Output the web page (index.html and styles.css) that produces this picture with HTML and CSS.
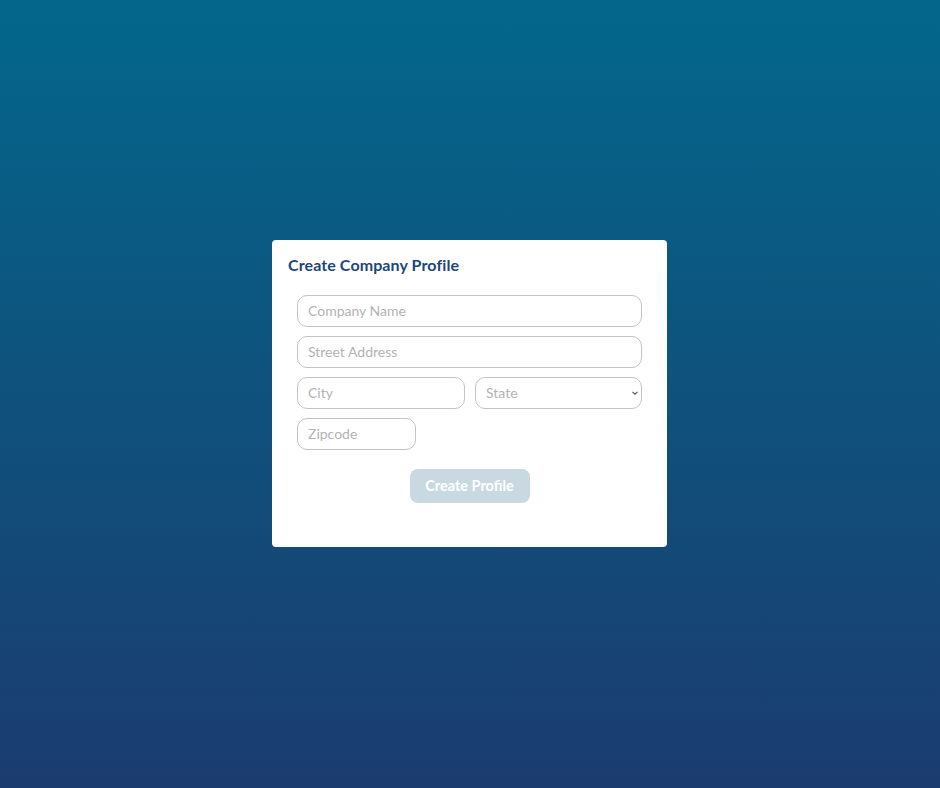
FILE: index.html
```html
<!DOCTYPE html>
<html>
<head>
<meta charset="utf-8">
<link rel="stylesheet" href="styles.css">
</head>
<body>
<div class="page">
  <div class="card">
    <h1 class="title">Create Company Profile</h1>
    <form class="form">
      <input class="field" type="text" placeholder="Company Name">
      <input class="field" type="text" placeholder="Street Address">
      <div class="row">
        <input class="field" type="text" placeholder="City">
        <div class="select-wrap">
          <select class="field select"><option>State</option></select>
          <svg class="chev" width="8" height="6" viewBox="0 0 8 6"><path d="M1.5 1.8 L4 4.2 L6.5 1.8" fill="none" stroke="#555" stroke-width="1.1"/></svg>
        </div>
      </div>
      <input class="field zip" type="text" placeholder="Zipcode">
      <div class="actions">
        <button class="btn" type="button" disabled>Create Profile</button>
      </div>
    </form>
  </div>
</div>
</body>
</html>
```
FILE: styles.css
```css
* { box-sizing: border-box; }
html, body { margin: 0; height: 100%; }
body {
  font-family: "Lato", "Noto Sans", sans-serif;
  background: linear-gradient(180deg, #03678b 0%, #1b3c6f 100%);
}
.page {
  height: 788px;
  display: flex;
  align-items: flex-start;
  justify-content: flex-start;
  padding-top: 240px;
  padding-left: 272px;
}
.card {
  width: 395px;
  height: 307px;
  background: #fff;
  border-radius: 4px;
  padding: 15px 16px 0 16px;
}
.title {
  margin: 0;
  font-size: 16px;
  line-height: 20px;
  font-weight: 700;
  color: #1d467d;
  letter-spacing: 0.1px;
}
.form {
  margin-top: 20px;
  padding: 0 9px 0 9px;
  display: flex;
  flex-direction: column;
  gap: 9px;
}
.field {
  display: block;
  width: 100%;
  height: 32px;
  border: 1px solid #c4c4c4;
  border-radius: 10px;
  padding: 0 10px 1px;
  font-family: inherit;
  font-size: 14px;
  color: #333;
  background: #fff;
  outline: none;
}
.field::placeholder { color: #b3b3b3; }
.row {
  display: flex;
  gap: 10px;
}
.row > .field { flex: 0 0 168px; }
.select-wrap { position: relative; flex: 1; }
.select {
  appearance: none;
  -webkit-appearance: none;
  color: #b3b3b3;
}
.chev { position: absolute; right: 3px; top: 13px; }
.zip { width: 119px; }
.actions {
  display: flex;
  justify-content: center;
  margin-top: 10px;
}
.btn {
  width: 120px;
  height: 34px;
  border: none;
  border-radius: 8px;
  background: #c8d9e2;
  color: #fff;
  font-family: inherit;
  font-size: 14.5px;
  font-weight: 700;
  padding: 0 0 1px;
}
```
